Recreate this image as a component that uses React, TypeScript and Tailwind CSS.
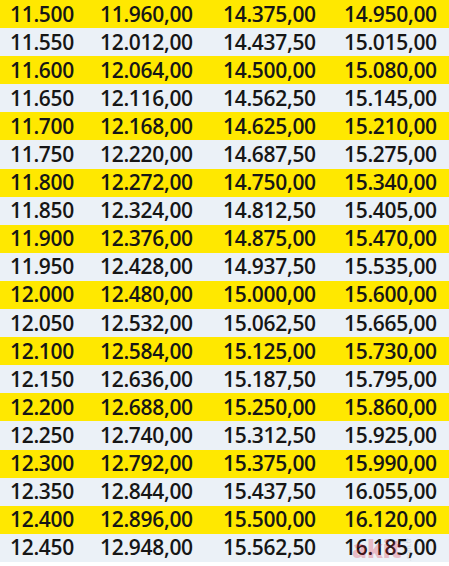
const rows: [string, string, string, string][] = [
  ['11.500', '11.960,00', '14.375,00', '14.950,00'],
  ['11.550', '12.012,00', '14.437,50', '15.015,00'],
  ['11.600', '12.064,00', '14.500,00', '15.080,00'],
  ['11.650', '12.116,00', '14.562,50', '15.145,00'],
  ['11.700', '12.168,00', '14.625,00', '15.210,00'],
  ['11.750', '12.220,00', '14.687,50', '15.275,00'],
  ['11.800', '12.272,00', '14.750,00', '15.340,00'],
  ['11.850', '12.324,00', '14.812,50', '15.405,00'],
  ['11.900', '12.376,00', '14.875,00', '15.470,00'],
  ['11.950', '12.428,00', '14.937,50', '15.535,00'],
  ['12.000', '12.480,00', '15.000,00', '15.600,00'],
  ['12.050', '12.532,00', '15.062,50', '15.665,00'],
  ['12.100', '12.584,00', '15.125,00', '15.730,00'],
  ['12.150', '12.636,00', '15.187,50', '15.795,00'],
  ['12.200', '12.688,00', '15.250,00', '15.860,00'],
  ['12.250', '12.740,00', '15.312,50', '15.925,00'],
  ['12.300', '12.792,00', '15.375,00', '15.990,00'],
  ['12.350', '12.844,00', '15.437,50', '16.055,00'],
  ['12.400', '12.896,00', '15.500,00', '16.120,00'],
  ['12.450', '12.948,00', '15.562,50', '16.185,00'],
];

export default function App() {
  return (
    <div
      className="relative w-[449px] h-[566px] bg-white overflow-hidden text-[#161616]"
      style={{ fontFamily: '"Open Sans", "Liberation Sans", sans-serif' }}
    >
      {rows.map((r, i) => (
        <div
          key={r[0]}
          className={`flex items-center h-[28.1px] pl-[10px] text-[21px] font-semibold leading-none tracking-[-0.3px] ${
            i % 2 === 0 ? 'bg-[#ffe800]' : 'bg-[#ebf1f7]'
          }`}
        >
          <span className="w-[90px]">{r[0]}</span>
          <span className="w-[123px]">{r[1]}</span>
          <span className="w-[121px]">{r[2]}</span>
          <span>{r[3]}</span>
        </div>
      ))}

      {/* site watermark */}
      <div className="absolute left-[352px] top-[537px] flex items-end gap-[3px] opacity-25 pointer-events-none">
        <span className="text-[24px] font-extrabold leading-none text-[#e0203a]">akit</span>
        <span className="text-[7px] leading-none text-[#777] [writing-mode:vertical-rl] rotate-180">.com.tr</span>
      </div>
    </div>
  );
}
